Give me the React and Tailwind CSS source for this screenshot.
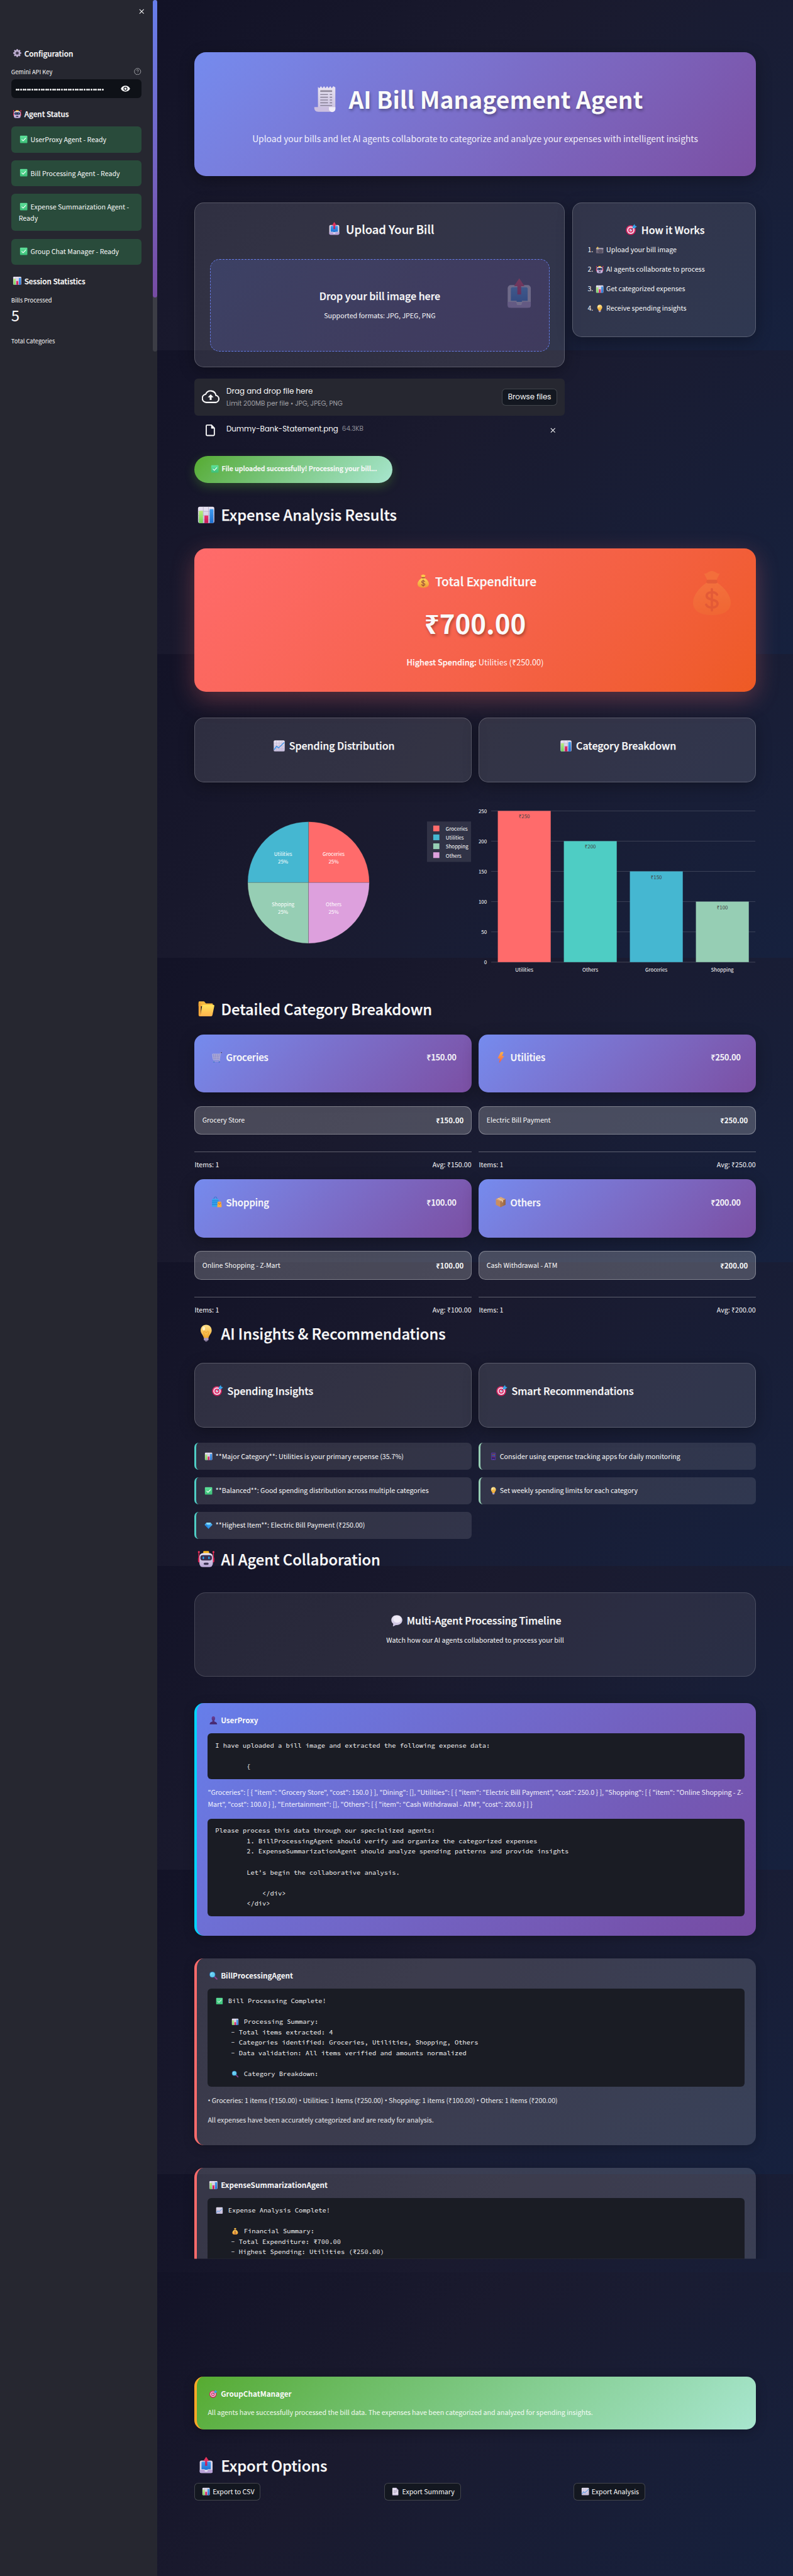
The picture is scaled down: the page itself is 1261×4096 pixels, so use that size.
/* ---------- icons (32 x 32 grid) ---------- */

function IconDefs() {
  const g = (id, a, b, horizontal) => (
    <linearGradient id={id} x1="0" y1="0" x2={horizontal ? 1 : 0} y2={horizontal ? 0 : 1}>
      <stop stopColor={a} />
      <stop offset="1" stopColor={b} />
    </linearGradient>
  );
  return (
    <svg className="absolute h-0 w-0" aria-hidden="true">
      <defs>
        {g("paper", "#e9e4f2", "#c8bede")}
        {g("blue", "#3f9cf0", "#1d6fd0")}
        {g("green", "#5fe39b", "#3cbf78")}
        {g("lime", "#b9ec7a", "#6fd35a")}
        {g("pink", "#e8316d", "#c41a55")}
        {g("gold", "#ffd75a", "#ee9a34")}
        {g("bulb", "#ffe08a", "#f0a92e")}
        {g("folder", "#ffe35c", "#ffb24d")}
        {g("bolt", "#ffb347", "#ee5a4a")}
        {g("robot", "#eae4f4", "#b9a6d6")}
        {g("arrow", "#f03a5a", "#c2185b")}
        {g("gem", "#5cc6f7", "#1c6fd6")}
        {g("bust", "#6a3f96", "#41256b")}
        {g("box", "#d9a271", "#94613f", true)}
      </defs>
    </svg>
  );
}

const ICONS = {
  receipt: (
    <>
      <path d="M8 3l1.6 1.3L11.2 2l1.7 2.3L14.6 2l1.7 2.3L18 2l1.7 2.300L21.4 2l1.7 2.3L24.8 2 27 3.5V27c0 1.8-1.2 3-3 3H8z" fill="url(#paper)" />
      <path d="M4 25h16v2.500c0 1.500.9 2.500 2.500 2.500H8c-2.600 0-4-1.700-4-4z" fill="#cbbfe0" />
      <path d="M20 25h7v2a3.300 3.300 0 0 1-7 0z" fill="#f1edf8" />
      <rect x="10.5" y="6.5" width="13" height="2" rx=".6" fill="#918a9c" />
      <path d="M10.5 11.2h8.500M20.8 11.2h2.700M10.5 14.2h8.500M20.8 14.2h2.700M10.5 17.2h8.500M20.8 17.2h2.700M10.5 20.2h8.500M20.8 20.2h2.700M10.5 23.2h13" stroke="#8d869b" strokeWidth="1.1" fill="none" />
    </>
  ),
  outbox: (
    <>
      <rect x="5" y="8" width="22" height="21.5" rx="3" fill="#dcd6e8" />
      <path d="M5 24h22v3.500a2 2 0 0 1-2 2H7a2 2 0 0 1-2-2z" fill="#b9a2d8" />
      <path d="M8 11.500A1.500 1.500 0 0 1 9.500 10h13a1.500 1.500 0 0 1 1.500 1.500V23h-5.500v1.500h-5V23H8z" fill="url(#blue)" />
      <path d="M13 24h6l-1 3h-4z" fill="#e8e1f2" />
      <path d="M16 1.500l5 7.500h-3.200v8h-3.600V9H11z" fill="url(#arrow)" />
    </>
  ),
  target: (
    <>
      <circle cx="14.5" cy="17.5" r="12.5" fill="url(#pink)" />
      <circle cx="14.5" cy="17.5" r="9.5" fill="#f1dcec" />
      <circle cx="14.5" cy="17.5" r="6.4" fill="#e02f68" />
      <circle cx="14.5" cy="17.5" r="3.3" fill="#f1dcec" />
      <path d="M14 18L22 10" stroke="#22568f" strokeWidth="1.6" />
      <path d="M19 8l5-6 1.500 4.500L30 8l-6 5-4.500-.5z" fill="#36a3ea" />
    </>
  ),
  camera: (
    <>
      <rect x="2" y="8" width="28" height="20" rx="3" fill="#6f6779" />
      <rect x="2" y="8" width="28" height="5" rx="2" fill="#a79fb4" />
      <circle cx="18" cy="19" r="7" fill="#3c3745" />
      <circle cx="18" cy="19" r="5" fill="#8a819a" />
      <circle cx="18" cy="19" r="3" fill="#37313f" />
      <path d="M8 2l1.500 4L14 7.500 9.500 9 8 14 6.500 9 2 7.500 6.500 6z" fill="#ffd65a" />
    </>
  ),
  robot: (
    <>
      <path d="M3.500 3v12M28.500 3v12" stroke="#e5254f" strokeWidth="1.5" />
      <circle cx="3.5" cy="4" r="1.7" fill="#f2305a" />
      <circle cx="28.5" cy="4" r="1.7" fill="#f2305a" />
      <rect x="2" y="13" width="28" height="9" rx="2" fill="#d61f4f" />
      <rect x="11" y="2.5" width="10" height="4.5" rx="1.5" fill="#f8b61c" />
      <rect x="4.5" y="6" width="23" height="24" rx="6" fill="url(#robot)" />
      <rect x="6" y="9.5" width="20" height="9" rx="4" fill="#3a3152" />
      <rect x="10" y="11.8" width="2.4" height="4.6" rx="1.2" fill="#22a7f2" />
      <rect x="19.6" y="11.8" width="2.4" height="4.6" rx="1.2" fill="#22a7f2" />
      <rect x="11.8" y="22.5" width="8.4" height="3.6" rx="1.8" fill="#3f3656" />
    </>
  ),
  bars: (
    <>
      <rect x="2" y="2" width="28" height="28" rx="3" fill="url(#paper)" />
      <path d="M2 10h28M2 17h28M2 24h28M11 2v28M20 2v28" stroke="#b9aecb" strokeWidth=".9" />
      <path d="M3.500 10a1 1 0 0 1 1-1h5a1 1 0 0 1 1 1v20h-6a1 1 0 0 1-1-1z" fill="url(#lime)" />
      <path d="M13 18a1 1 0 0 1 1-1h4.500a1 1 0 0 1 1 1v12H13z" fill="url(#pink)" />
      <path d="M22 7a1 1 0 0 1 1-1h4.500a1 1 0 0 1 1 1v22a1 1 0 0 1-1 1H22z" fill="url(#blue)" />
    </>
  ),
  trend: (
    <>
      <rect x="2" y="2" width="28" height="28" rx="3" fill="url(#paper)" />
      <path d="M2 9h28M2 16h28M2 23h28M9 2v28M16 2v28M23 2v28" stroke="#b9aecb" strokeWidth=".9" />
      <path d="M3 26l6-9 5.500 4L29 7" stroke="#2f8fe8" strokeWidth="2.2" fill="none" strokeLinejoin="round" />
    </>
  ),
  bulb: (
    <>
      <path d="M16 1.500c-6 0-9.500 4.600-9.500 9.700 0 5.300 4.700 7.800 5.500 13.300h8c.8-5.500 5.500-8 5.500-13.300 0-5.100-3.500-9.700-9.500-9.700z" fill="url(#bulb)" />
      <path d="M13.500 24l-1.800-9.500c0-2.500 3-2.500 3 0h2.600c0-2.500 3-2.500 3 0L18.500 24" stroke="#e9a02a" strokeWidth="1" fill="none" />
      <ellipse cx="12" cy="8" rx="2.2" ry="3.2" fill="#fff3c4" />
      <rect x="12" y="24" width="8" height="4.6" rx="1.5" fill="#b6a3c9" />
      <path d="M12 26.200h8" stroke="#8a7aa2" strokeWidth=".8" />
      <rect x="14" y="28" width="4" height="2.5" rx="1" fill="#7e7191" />
    </>
  ),
  check: (
    <>
      <rect x="2" y="2" width="28" height="28" rx="2.5" fill="url(#green)" />
      <path d="M9 16.500l5 5L23.500 11" stroke="#fff" strokeWidth="2.6" fill="none" strokeLinecap="round" strokeLinejoin="round" />
    </>
  ),
  money: (
    <>
      <path d="M11 3.500c2 .6 2.400-1.500 5-1.500s3 2.100 5 1.500l-2.500 5h-5z" fill="#ffc94a" />
      <path d="M12.500 9.500h7c4.500 3 8.500 8 8.500 12.500 0 5-4 8-12 8S4 27 4 22c0-4.500 4-9.500 8.500-12.500z" fill="url(#gold)" />
      <rect x="12.5" y="7.5" width="7" height="2.4" rx="1.2" fill="#9a5038" />
      <path d="M19.300 17c-.6-1.100-1.700-1.600-3.200-1.600-2 0-3.400.8-3.400 2.300 0 3.400 6.900 1.700 6.900 5 0 1.600-1.500 2.500-3.600 2.500-1.700 0-3-.6-3.600-1.800M16 13.500v13.500" stroke="#9a4a3a" strokeWidth="1.5" fill="none" strokeLinecap="round" />
    </>
  ),
  folder: (
    <>
      <path d="M3 5a1.500 1.500 0 0 1 1.500-1.500h8L15.500 7H26a1.500 1.500 0 0 1 1.500 1.500V12H3z" fill="#f5b83e" />
      <path d="M3 6h4v23H5a2 2 0 0 1-2-2z" fill="#f2a63c" />
      <path d="M9 11.500A2.500 2.500 0 0 1 11.500 9.500h17A1.500 1.500 0 0 1 30 11.300L26.800 27a2.500 2.500 0 0 1-2.500 2H4.500c1 0 1.600-.6 1.800-1.500z" fill="url(#folder)" />
    </>
  ),
  cart: (
    <>
      <path d="M5 7h21l-2 15H7z" fill="#8f86b5" fillOpacity=".55" stroke="#cfc8dd" strokeWidth="1.3" />
      <path d="M5.500 12h20M6 17h19M11 7l1 15M16 7v15M21 7l-1 15" stroke="#cfc8dd" strokeWidth="1" />
      <path d="M26 7l1-4h3M24 22l1 4H7" stroke="#b9b1cc" strokeWidth="1.4" fill="none" />
      <rect x="27.5" y="1.8" width="3.5" height="2.2" rx="1" fill="#4b4560" />
      <circle cx="9" cy="28.5" r="1.8" fill="#3d78c9" />
      <circle cx="23.5" cy="28.5" r="1.8" fill="#3d78c9" />
    </>
  ),
  bolt: (
    <path d="M17.500 1.500h5c.8 0 1 .5.700 1.100L19.500 12h4.200c1 0 1.300.8.700 1.600L13 30c-.6.800-1.700.4-1.500-.6L13.500 19H8.800c-.8 0-1.200-.6-.9-1.300l7.600-15c.4-.8 1-1.200 2-1.200z" fill="url(#bolt)" />
  ),
  shopping: (
    <>
      <path d="M9 9V6a4 4 0 0 1 8 0v3" stroke="#2577c9" strokeWidth="1.5" fill="none" />
      <path d="M4 7.500h17l1.500 20a1.500 1.500 0 0 1-1.500 1.500H5a1.500 1.500 0 0 1-1.500-1.500z" fill="#37a4ee" />
      <path d="M3.800 13h18M3.600 18h18.500M3.500 23h18.700" stroke="#1f7fd2" strokeWidth="1.7" />
      <path d="M19 15h9.500L30 28.500a1.500 1.500 0 0 1-1.500 1.500H18z" fill="#ffab3d" />
      <path d="M21.500 18v1.500a2.500 2.500 0 0 0 5 0V18" stroke="#a75a22" strokeWidth="1.2" fill="none" />
    </>
  ),
  box: (
    <>
      <path d="M16 2l13 6v15.500L16 30 3 23.500V8z" fill="url(#box)" />
      <path d="M3 8l13 6v16L3 23.500z" fill="#c98d60" />
      <path d="M16 2l13 6-13 6L3 8z" fill="#dba97c" />
      <path d="M9 5.200l13 6v5l-2.500 1V12.500L7 6.200z" fill="#efd0aa" />
      <path d="M16 14v16" stroke="#7c4c33" strokeWidth=".8" />
    </>
  ),
  phone: (
    <>
      <rect x="7" y="2" width="18" height="28" rx="3" fill="#53389a" />
      <rect x="9.5" y="5" width="13" height="21" rx="1" fill="#2e2168" />
      <path d="M11 8h2.500M15 8h2.500M19 8h2.500" stroke="#f5a53a" strokeWidth="2.4" />
      <path d="M11 13h2.500M15 13h2.500M19 13h2.500" stroke="#56c1f0" strokeWidth="2.4" />
      <path d="M11 18h2.500M15 18h2.500M19 18h2.500" stroke="#ee5b86" strokeWidth="2.4" />
      <circle cx="16" cy="28" r="1" fill="#a993dd" />
    </>
  ),
  gem: (
    <>
      <path d="M8 5h16l7 8-15 16L1 13z" fill="url(#gem)" />
      <path d="M8 5l3 8h10l3-8z" fill="#8bdcfb" />
      <path d="M1 13h10L16 29z" fill="#2383dc" />
      <path d="M11 13h10l-5 16z" fill="#2f9be8" />
    </>
  ),
  speech: (
    <>
      <path d="M16 2C8 2 2 7.400 2 14.500c0 4 2 7.300 5 9.500L6 29.500c-.1.700.5 1 1.100.7L13.500 27c9.500 1.200 16.500-4.800 16.500-12.500C30 7.400 24 2 16 2z" fill="url(#paper)" />
      <ellipse cx="17" cy="12.5" rx="10" ry="8.5" fill="#efeaf6" />
    </>
  ),
  bust: (
    <path d="M16 2c-4 0-6 3-6 7s1 6.500 2.500 8v3C7 21.500 3 24.500 3 30h26c0-5.500-4-8.500-9.500-10v-3C21 15.500 22 13 22 9s-2-7-6-7z" fill="url(#bust)" />
  ),
  search: (
    <>
      <path d="M19 19l9 9" stroke="#8c3f8f" strokeWidth="4.5" strokeLinecap="round" />
      <circle cx="12.5" cy="12.5" r="10.5" fill="#2b6ea8" />
      <circle cx="12.5" cy="12.5" r="8.7" fill="#62cdf2" />
      <path d="M7.500 12a5 5 0 0 1 4-5" stroke="#c3f0fd" strokeWidth="1.5" fill="none" strokeLinecap="round" />
    </>
  ),
  page: (
    <>
      <path d="M4.500 4a2 2 0 0 1 2-2H20l7.500 8v18a2 2 0 0 1-2 2h-19a2 2 0 0 1-2-2z" fill="#e6dff0" />
      <path d="M20 2l7.500 8H22a2 2 0 0 1-2-2z" fill="#b7a7cf" />
      <path d="M9 13h14M9 17h14M9 21h9" stroke="#9084a6" strokeWidth="1.5" />
      <path d="M4.500 27.500h23V28a2 2 0 0 1-2 2h-19a2 2 0 0 1-2-2z" fill="#bba9d6" />
    </>
  ),
  gear: (
    <>
      <g fill="#b9a8cd">
        <rect x="13" y="2" width="6" height="28" rx="2" />
        <rect x="13" y="2" width="6" height="28" rx="2" transform="rotate(45 16 16)" />
        <rect x="13" y="2" width="6" height="28" rx="2" transform="rotate(90 16 16)" />
        <rect x="13" y="2" width="6" height="28" rx="2" transform="rotate(135 16 16)" />
      </g>
      <circle cx="16" cy="16" r="10" fill="#c9bbdb" />
      <circle cx="16" cy="16" r="6.5" fill="#7a6b8d" />
      <circle cx="16" cy="16" r="4" fill="#3d3848" />
    </>
  ),
};

function Svg({ name, className }) {
  return (
    <svg viewBox="0 0 32 32" className={className} aria-hidden="true">
      {ICONS[name]}
    </svg>
  );
}

/* Icon that leads a line of text; its slot scales with the font size. */
function Lead({ name }) {
  return (
    <span className="inline-block w-[1.77em] shrink-0 pl-[0.15em] align-[-0.2em]">
      <Svg name={name} className="size-[1.25em]" />
    </span>
  );
}

function Mono({ name }) {
  return (
    <span className="inline-block h-[16.6px] w-[1.37em] pl-[0.12em] align-top">
      <Svg name={name} className="mt-[2px] size-[1.14em]" />
    </span>
  );
}

/* ---------- shared pieces ---------- */

const semibold = "font-medium [-webkit-text-stroke:0.25px_currentColor]";
const glass =
  "rounded-[15px] border border-white/20 bg-white/11 shadow-[0_6px_24px_rgba(0,0,0,0.3)]";
const violet =
  "bg-linear-135 from-[#758bee] to-[#7b4fa3] shadow-[0_6px_24px_rgba(0,0,0,0.3)]";

function H2({ icon, className = "", children }) {
  return (
    <h2 className={`flex h-[30px] items-center text-[23.73px] leading-[30px] ${semibold} ${className}`}>
      <Lead name={icon} />
      {children}
    </h2>
  );
}

function Backdrop() {
  const tile = "w-full bg-linear-135 from-[#0f0f23] via-[#1a1a2e] to-[#16213e] bg-no-repeat";
  const low = `bg-[length:100%_557px] bg-bottom ${tile}`;
  return (
    <div className="absolute inset-0 -z-10 flex flex-col bg-[#15162b]" aria-hidden="true">
      <div className={`h-[557px] ${tile}`} />
      <div className={`h-[483px] ${low}`} />
      <div className={`h-[483px] ${low}`} />
      <div className={`h-[484px] ${low}`} />
      <div className={`h-[483px] ${low}`} />
      <div className={`h-[483px] ${low}`} />
      <div className={`h-[484px] ${low}`} />
      <div className={`h-[156px] bg-[length:100%_557px] bg-[position:0_-74px] ${tile}`} />
      <div className={`flex-1 ${low}`} />
    </div>
  );
}

/* ---------- sidebar ---------- */

const AGENTS = [
  "UserProxy Agent - Ready",
  "Bill Processing Agent - Ready",
  "Expense Summarization Agent - Ready",
  "Group Chat Manager - Ready",
];

function Cross({ className = "" }) {
  return (
    <svg viewBox="0 0 10 10" className={`size-[8.5px] ${className}`} stroke="#fafafa" strokeWidth="1.2">
      <path d="M1 1l8 8M9 1l-8 8" />
    </svg>
  );
}

function SideHeading({ icon, className, children }) {
  return (
    <h3 className={`flex h-[18px] items-center text-[11.8px] leading-[18px] ${semibold} ${className}`}>
      <Lead name={icon} />
      {children}
    </h3>
  );
}

function Sidebar() {
  return (
    <aside className="flex w-[250px] shrink-0 bg-[#262730]">
      <div className="w-[242.5px] px-[17.8px] pt-[14px]">
        <div className="-mr-[4.3px] flex h-[8.5px] justify-end">
          <Cross />
        </div>
        <SideHeading icon="gear" className="mt-[53.3px]">Configuration</SideHeading>
        <div className="mt-[12.8px] flex h-[14px] items-center justify-between text-[9.32px] leading-[14px]">
          <span>Gemini API Key</span>
          <svg viewBox="0 0 24 24" className="size-[11.5px]" fill="none" stroke="#a3a4a9" strokeWidth="2">
            <circle cx="12" cy="12" r="10.5" />
            <path d="M9 9a3 3 0 0 1 6 .5c0 2-3 2.500-3 4.500M12 17v.8" />
          </svg>
        </div>
        <div className="mt-[5.7px] flex h-[29.6px] items-center rounded-[6px] bg-[#0e1117] pl-[7px]">
          <div className="mt-[2px] flex gap-[0.61px]">
            {Array.from({ length: 39 }, (_, i) => (
              <span key={i} className="size-[3px] rounded-full bg-[#fafafa]" />
            ))}
          </div>
          <svg viewBox="0 0 24 16" className="ml-[27.2px] h-[10px] w-[15px]">
            <path d="M12 .5C6.700.5 2.200 3.600.3 8c1.900 4.400 6.400 7.500 11.700 7.500S21.800 12.400 23.700 8C21.800 3.600 17.300.5 12 .5zm0 12.500a5 5 0 1 1 0-10 5 5 0 0 1 0 10zm0-8a3 3 0 1 0 0 6 3 3 0 0 0 0-6z" fill="#fafafa" />
          </svg>
        </div>
        <SideHeading icon="robot" className="mt-[16.2px]">Agent Status</SideHeading>
        <div className="mt-[11.3px] flex flex-col gap-[12.2px]">
          {AGENTS.map((a) => (
            <div key={a} className="rounded-[6px] bg-[#294b3b] px-[11.9px] py-[11.75px] text-[10.65px] leading-[17.8px]">
              <Lead name="check" />
              {a}
            </div>
          ))}
        </div>
        <SideHeading icon="bars" className="mt-[16.6px]">Session Statistics</SideHeading>
        <p className="mt-[14px] text-[9.32px] leading-[14px]">Bills Processed</p>
        <p className="mt-[2.9px] text-[24px] leading-[30px]">5</p>
        <p className="mt-[19.1px] text-[9.32px] leading-[14px]">Total Categories</p>
      </div>
      <div className="h-[558.7px] w-[7.5px] rounded-[4px] bg-[#3c3d45]">
        <div className="h-[472.6px] rounded-[4px] bg-linear-to-b from-[#667eea] to-[#764ba2]" />
      </div>
    </aside>
  );
}

/* ---------- upload ---------- */

const STEPS = [
  ["camera", "Upload your bill image"],
  ["robot", "AI agents collaborate to process"],
  ["bars", "Get categorized expenses"],
  ["bulb", "Receive spending insights"],
];

function Uploader() {
  return (
    <div className="font-['Poppins','Inter',sans-serif]">
      <div className="mt-[18px] flex h-[58.8px] items-center rounded-[6px] bg-[#262730] pr-[12.4px] pl-[11.4px]">
        <svg viewBox="0 0 24 24" className="size-[28px]" fill="none" stroke="#fafafa" strokeWidth="1.8">
          <path d="M19.200 10.100A7.300 7.300 0 0 0 5.300 8.300 5.700 5.700 0 0 0 6 19.600h12.800a4.800 4.800 0 0 0 .4-9.500z" />
          <path d="M12 8.500l4 4.200h-2.700v3.600h-2.600v-3.600H8z" fill="#fafafa" stroke="none" />
        </svg>
        <div className="ml-[11.3px] flex-1">
          <p className="text-[11.89px] leading-[17.8px]">Drag and drop file here</p>
          <p className="mt-[2.6px] text-[10.41px] leading-[15px] text-[#a0a0a6]">Limit 200MB per file • JPG, JPEG, PNG</p>
        </div>
        <button className="h-[27.6px] w-[87.8px] rounded-[6px] border border-white/20 bg-[#131720] text-[11.85px] leading-[24px]">
          Browse files
        </button>
      </div>
      <div className="flex h-[43.2px] items-center pr-[15px] pl-[17.5px]">
        <svg viewBox="0 0 16 20" className="mt-[4px] h-[18.4px] w-[14.8px]" fill="none" stroke="#fafafa" strokeWidth="2">
          <path d="M2.500 1h7.500l5 5v11.500A1.500 1.500 0 0 1 13.500 19h-11A1.500 1.500 0 0 1 1 17.500v-15A1.500 1.500 0 0 1 2.500 1z" />
          <path d="M9.500 1v6H15z" fill="#fafafa" stroke="none" />
        </svg>
        <span className="ml-[18.2px] text-[11.89px] leading-4">Dummy-Bank-Statement.png</span>
        <span className="ml-[6px] flex-1 text-[10.41px] leading-4 text-[#8f8f98]">64.3KB</span>
        <Cross className="mt-[3px]" />
      </div>
    </div>
  );
}

function UploadSection() {
  return (
    <section className="mt-[41.8px] grid grid-cols-[589px_1fr] items-start gap-x-[11.9px]">
      <div>
        <div className={`h-[262px] px-[23.2px] pt-[28.6px] ${glass}`}>
          <h3 className={`text-center text-[18.44px] leading-[24px] ${semibold}`}>
            <Lead name="outbox" />
            Upload Your Bill
          </h3>
          <div className="relative mt-[36.7px] h-[147px] rounded-[15px] border-[1.5px] border-dashed border-[#667eea] bg-linear-135 from-[#667eea]/20 to-[#764ba2]/20 pt-[47px] text-center">
            <h4 className={`text-[16px] leading-5 ${semibold}`}>Drop your bill image here</h4>
            <p className="mt-[13.4px] text-[10.65px] leading-4">Supported formats: JPG, JPEG, PNG</p>
            <Svg name="outbox" className="absolute top-[26.6px] right-[21px] size-[53.4px] opacity-30" />
          </div>
        </div>
        <Uploader />
      </div>
      <div className={`h-[214.4px] pt-[31.9px] ${glass}`}>
        <h3 className={`text-center text-[16px] leading-5 ${semibold}`}>
          <Lead name="target" />
          How it Works
        </h3>
        <ol className="mt-[14.1px] flex flex-col gap-[15px] pl-[23.1px] text-[10.65px] leading-4">
          {STEPS.map(([icon, text], i) => (
            <li key={text} className="flex h-4 items-center">
              <span className="w-[10.9px] shrink-0">{i + 1}.</span>
              <Lead name={icon} />
              {text}
            </li>
          ))}
        </ol>
      </div>
    </section>
  );
}

/* ---------- charts ---------- */

const SLICES = [
  { name: "Groceries", color: "#ff6b6b", d: "M181.600 159.300V62.700A96.600 96.600 0 0 1 278.200 159.300Z", x: 221.5, y: 116.5 },
  { name: "Utilities", color: "#45b7d1", d: "M181.600 159.300H85A96.600 96.600 0 0 1 181.600 62.700Z", x: 141.1, y: 116.5 },
  { name: "Shopping", color: "#96ceb4", d: "M181.600 159.300V255.900A96.600 96.600 0 0 1 85 159.300Z", x: 141.1, y: 196.7 },
  { name: "Others", color: "#dda0dd", d: "M181.600 159.300H278.200A96.600 96.600 0 0 1 181.600 255.900Z", x: 221.5, y: 196.7 },
];

function PieChart() {
  return (
    <svg viewBox="0 0 440.15 311" className="h-[311px] w-full text-[8px]" fill="#fff">
      {SLICES.map((s) => (
        <g key={s.name}>
          <path d={s.d} fill={s.color} stroke="#444" strokeOpacity=".45" strokeWidth=".5" />
          <text x={s.x} y={s.y} textAnchor="middle">{s.name}</text>
          <text x={s.x} y={s.y + 12} textAnchor="middle">25%</text>
        </g>
      ))}
      <rect x="370" y="62.2" width="70.1" height="64.3" fillOpacity=".1" />
      {SLICES.map((s, i) => (
        <g key={s.name}>
          <rect x="379.9" y={68.7 + i * 14.16} width="9.8" height="9.1" fill={s.color} />
          <text x="399.7" y={77.1 + i * 14.16}>{s.name}</text>
        </g>
      ))}
    </svg>
  );
}

const BARS = [
  ["Utilities", 250, "#ff6b6b"],
  ["Others", 200, "#4ecdc4"],
  ["Groceries", 150, "#45b7d1"],
  ["Shopping", 100, "#96ceb4"],
];

function BarChart() {
  const y = (v) => 285.8 - v * 0.9616;
  return (
    <svg viewBox="0 0 440.15 311" className="h-[311px] w-full text-[8px]" fill="#fff">
      {[0, 50, 100, 150, 200, 250].map((v) => (
        <g key={v}>
          <path d={`M20 ${y(v)}H440.1`} stroke="#fff" strokeOpacity={v ? 0.2 : 0.14} strokeWidth={v ? 0.8 : 1.3} />
          <text x="13.2" y={y(v) + 3.3} textAnchor="end">{v}</text>
        </g>
      ))}
      {BARS.map(([name, v, color], i) => (
        <g key={name}>
          <rect x={30.6 + i * 105} y={y(v)} width="84.1" height={285.8 - y(v)} fill={color} />
          <text x={72.6 + i * 105} y={y(v) + 12} textAnchor="middle" fill="#444">₹{v}</text>
          <text x={72.6 + i * 105} y="301.4" textAnchor="middle">{name}</text>
        </g>
      ))}
    </svg>
  );
}

function ChartSection() {
  return (
    <section className="mt-[41.4px] grid grid-cols-2 gap-x-[11.9px]">
      {[["trend", "Spending Distribution"], ["bars", "Category Breakdown"]].map(([icon, t]) => (
        <div key={t} className={`h-[103px] pt-[33.3px] ${glass}`}>
          <h3 className={`text-center text-[16px] leading-5 ${semibold}`}>
            <Lead name={icon} />
            {t}
          </h3>
        </div>
      ))}
      <PieChart />
      <BarChart />
    </section>
  );
}

/* ---------- category breakdown ---------- */

const CATEGORIES = [
  ["cart", "Groceries", "Grocery Store", "₹150.00"],
  ["bolt", "Utilities", "Electric Bill Payment", "₹250.00"],
  ["shopping", "Shopping", "Online Shopping - Z-Mart", "₹100.00"],
  ["box", "Others", "Cash Withdrawal - ATM", "₹200.00"],
];

function Category({ icon, name, item, amount }) {
  return (
    <div className="h-[229.8px] text-[10.65px]">
      <div className={`flex h-[92.6px] items-start justify-between rounded-[15px] px-[23.8px] pt-[26.3px] leading-5 ${violet}`}>
        <h3 className={`flex h-5 items-center text-[14.9px] ${semibold}`}>
          <Lead name={icon} />
          {name}
        </h3>
        <span className={`text-[12.8px] leading-5 ${semibold}`}>{amount}</span>
      </div>
      <div className="mt-[21.4px] flex h-[45.7px] items-center justify-between rounded-[11px] border border-white/30 bg-white/21 px-[11.4px]">
        <span>{item}</span>
        <span className="text-[11.44px] font-bold">{amount}</span>
      </div>
      <div className="mt-[27.2px] flex justify-between border-t border-white/30 pt-[12px] leading-4">
        <span>Items: 1</span>
        <span>Avg: {amount}</span>
      </div>
    </div>
  );
}

/* ---------- insights ---------- */

function InsightColumn({ title, edge, rows }) {
  return (
    <div>
      <div className={`h-[103px] pt-[32.8px] pl-[22.8px] ${glass}`}>
        <h3 className={`flex h-5 items-center text-[16px] leading-5 ${semibold}`}>
          <Lead name="target" />
          {title}
        </h3>
      </div>
      <div className="mt-[23.9px] flex flex-col gap-[11.9px]">
        {rows.map(([icon, text]) => (
          <div key={text} className={`flex h-[42.85px] items-center rounded-[7px] border-l-3 bg-white/11 pl-[11.5px] text-[10.65px] ${edge}`}>
            <Lead name={icon} />
            {text}
          </div>
        ))}
      </div>
    </div>
  );
}

/* ---------- agent messages ---------- */

function Message({ icon, name, className, children }) {
  return (
    <article className={`rounded-[15px] border-l-4 pt-[18.3px] pr-[18px] pl-[17px] text-[10.65px] leading-[19px] ${className}`}>
      <h4 className="flex h-[18px] items-center text-[11.73px] leading-[18px] font-bold">
        <Lead name={icon} />
        {name}
      </h4>
      {children}
    </article>
  );
}

function Code({ className, children }) {
  return (
    <pre className={`rounded-[6px] bg-[#1a1c24] pt-[11.6px] pb-[11.4px] pl-[11.8px] font-['Source_Code_Pro','Liberation_Mono',monospace] text-[10.41px] leading-[16.6px] ${className}`}>
      {children}
    </pre>
  );
}

function Dot() {
  return <span className="font-['Open_Sans',sans-serif]">•</span>;
}

const REQUEST_INTRO = `I have uploaded a bill image and extracted the following expense data:

        {`;

const REQUEST_BODY = `Please process this data through our specialized agents:
        1. BillProcessingAgent should verify and organize the categorized expenses
        2. ExpenseSummarizationAgent should analyze spending patterns and provide insights

        Let's begin the collaborative analysis.

            </div>
        </div>`;

function Conversation() {
  const shadow = "shadow-[0_4px_18px_rgba(0,0,0,0.22)]";
  return (
    <>
      <Message icon="bust" name="UserProxy" className={`mt-[41.6px] h-[370.2px] border-[#00d4ff] bg-linear-135 from-[#667eea] to-[#764ba2] ${shadow}`}>
        <Code className="mt-[12.1px]">{REQUEST_INTRO}</Code>
        <p className="mt-[11.5px] whitespace-nowrap text-white/90">
          {'"Groceries": [ { "item": "Grocery Store", "cost": 150.0 } ], "Dining": [], "Utilities": [ { "item": "Electric Bill Payment", "cost": 250.0 } ], "Shopping": [ { "item": "Online Shopping - Z-'}
          <br />
          {'Mart", "cost": 100.0 } ], "Entertainment": [], "Others": [ { "item": "Cash Withdrawal - ATM", "cost": 200.0 } ] }'}
        </p>
        <Code className="mt-[13.1px]">{REQUEST_BODY}</Code>
      </Message>

      <Message icon="search" name="BillProcessingAgent" className={`mt-[35.6px] h-[297.4px] border-[#ff6b6b] bg-white/15 ${shadow}`}>
        <Code className="mt-[12.3px]">
          <Mono name="check" />{" Bill Processing Complete!\n\n    "}
          <Mono name="bars" />{" Processing Summary:\n    - Total items extracted: 4\n    - Categories identified: Groceries, Utilities, Shopping, Others\n    - Data validation: All items verified and amounts normalized\n\n    "}
          <Mono name="search" />{" Category Breakdown:"}
        </Code>
        <p className="mt-[11.8px] h-[19px] whitespace-nowrap text-white/90">
          <Dot /> Groceries: 1 items (₹150.00) <Dot /> Utilities: 1 items (₹250.00) <Dot /> Shopping: 1 items (₹100.00) <Dot /> Others: 1 items (₹200.00)
        </p>
        <p className="mt-[12px] text-white/90">All expenses have been accurately categorized and are ready for analysis.</p>
      </Message>

      <div className="mt-[35.7px] h-[144.9px] [clip-path:inset(-30px_-30px_0_-30px)]">
        <Message icon="bars" name="ExpenseSummarizationAgent" className={`h-[300px] border-[#ff6b6b] bg-white/15 ${shadow}`}>
          <Code className="mt-[12.3px] h-[200px]">
            <Mono name="trend" />{" Expense Analysis Complete!\n\n    "}
            <Mono name="money" />{" Financial Summary:\n    - Total Expenditure: ₹700.00\n    - Highest Spending: Utilities (₹250.00)"}
          </Code>
        </Message>
      </div>

      <Message icon="target" name="GroupChatManager" className={`mt-[187.2px] h-[84.6px] border-[#ffa726] bg-linear-135 from-[#56ab2f] to-[#a8e6cf] ${shadow}`}>
        <p className="mt-[11px] text-white/90">
          All agents have successfully processed the bill data. The expenses have been categorized and analyzed for spending insights.
        </p>
      </Message>
    </>
  );
}

/* ---------- page ---------- */

export default function App() {
  return (
    <div className="relative isolate flex h-[4096px] w-[1261px] overflow-hidden font-['Noto_Sans_CJK_SC','Noto_Sans',sans-serif] text-[#fafafa]">
      <IconDefs />
      <Backdrop />
      <Sidebar />
      <main className="min-w-0 flex-1 px-[59.4px]">
        <header className={`mt-[83.2px] h-[197px] rounded-[18.5px] pt-[50.2px] text-center ${violet}`}>
          <h1 className="text-[37.23px] leading-[48px] font-bold text-shadow-[1.5px_3px_4px_rgb(0_0_0/0.3)]">
            <Lead name="receipt" />
            AI Bill Management Agent
          </h1>
          <p className="mt-[26.4px] text-[13.83px] leading-6 text-white/90">
            Upload your bills and let AI agents collaborate to categorize and analyze your expenses with intelligent insights
          </p>
        </header>

        <UploadSection />

        <div className={`mt-[20.9px] flex h-[43.2px] w-[314.3px] items-center justify-center rounded-full bg-linear-135 from-[#56ab2f] to-[#a8e6cf] pb-[2px] text-[10.65px] shadow-[0_6px_16px_rgba(86,171,47,0.3)] ${semibold}`}>
          <Lead name="check" />
          File uploaded successfully! Processing your bill...
        </div>

        <H2 icon="bars" className="mt-[35.4px]">Expense Analysis Results</H2>

        <section className="relative mt-[38.3px] h-[228px] rounded-[18.5px] bg-linear-135 from-[#ff6b6b] to-[#ee5a24] pt-[40.1px] text-center shadow-[0_11px_37px_rgba(255,107,107,0.3)]">
          <h3 className={`text-[19.2px] leading-6 ${semibold}`}>
            <Lead name="money" />
            Total Expenditure
          </h3>
          <p className="mt-[28.5px] text-[42px] leading-[50px] font-bold text-shadow-[1.5px_3px_4px_rgb(0_0_0/0.3)]">₹700.00</p>
          <p className="mt-[29.3px] text-[12.78px] leading-[18px] text-white/95">
            <span className={semibold}>Highest Spending:</span> Utilities (₹250.00)
          </p>
          <Svg name="money" className="absolute top-[31px] right-[30px] size-[80px] opacity-15" />
        </section>

        <ChartSection />

        <H2 icon="folder" className="mt-[33.7px]">Detailed Category Breakdown</H2>
        <section className="mt-[25.8px] grid grid-cols-2 gap-x-[11.9px] gap-y-px">
          {CATEGORIES.map(([icon, name, item, amount]) => (
            <Category key={name} icon={icon} name={name} item={item} amount={amount} />
          ))}
        </section>

        <H2 icon="bulb">AI Insights &amp; Recommendations</H2>
        <section className="mt-[32.2px] grid grid-cols-2 gap-x-[11.9px]">
          <InsightColumn
            title="Spending Insights"
            edge="border-[#4ecdc4]"
            rows={[
              ["bars", "**Major Category**: Utilities is your primary expense (35.7%)"],
              ["check", "**Balanced**: Good spending distribution across multiple categories"],
              ["gem", "**Highest Item**: Electric Bill Payment (₹250.00)"],
            ]}
          />
          <InsightColumn
            title="Smart Recommendations"
            edge="border-[#96ceb4]"
            rows={[
              ["phone", "Consider using expense tracking apps for daily monitoring"],
              ["bulb", "Set weekly spending limits for each category"],
            ]}
          />
        </section>

        <H2 icon="robot" className="mt-[17.3px]">AI Agent Collaboration</H2>
        <section className="mt-[38.3px] h-[134px] rounded-[18px] border border-white/15 bg-white/8 pt-[33.2px] text-center">
          <h3 className={`text-[16px] leading-5 ${semibold}`}>
            <Lead name="speech" />
            Multi-Agent Processing Timeline
          </h3>
          <p className="mt-[13.2px] text-[10.65px] leading-4">Watch how our AI agents collaborated to process your bill</p>
        </section>

        <Conversation />

        <H2 icon="outbox" className="mt-[41.2px]">Export Options</H2>
        <div className="mt-[13.5px] grid grid-cols-3 gap-x-[11.9px]">
          {[["bars", "Export to CSV"], ["page", "Export Summary"], ["trend", "Export Analysis"]].map(([icon, t]) => (
            <button key={t} className="flex h-[28px] items-center justify-self-start rounded-[6px] border border-white/20 bg-[#131720] px-[8.9px] text-[10.65px]">
              <Lead name={icon} />
              {t}
            </button>
          ))}
        </div>
      </main>
    </div>
  );
}
